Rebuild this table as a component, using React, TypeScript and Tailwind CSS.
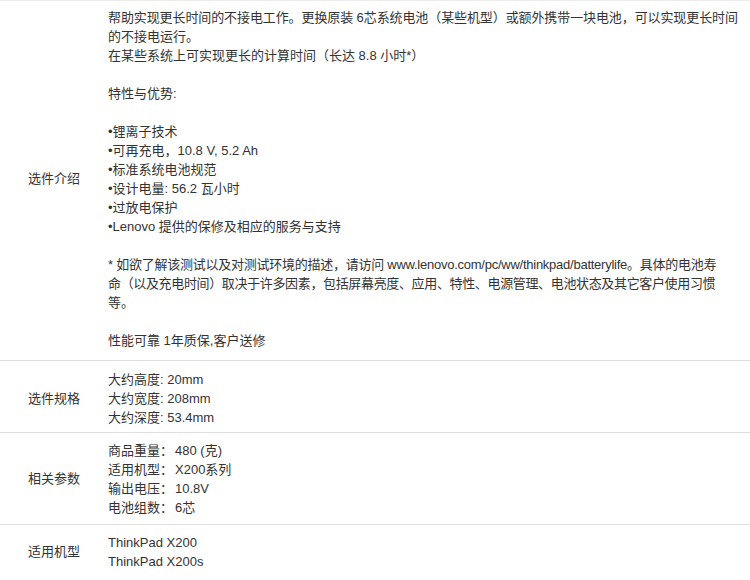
import React from "react";

const font = {
  fontFamily: '"Liberation Sans", "Noto Sans CJK SC", sans-serif',
};

function Line({ children, className = "" }: { children?: React.ReactNode; className?: string }) {
  return (
    <div className={`h-[19px] leading-[19px] whitespace-nowrap ${className}`}>{children ?? "\u00a0"}</div>
  );
}

function Row({
  label,
  children,
  className = "",
}: {
  label: string;
  children: React.ReactNode;
  className?: string;
}) {
  return (
    <div className={`flex border-b border-[#dedede] ${className}`}>
      <div className="w-[108px] shrink-0 flex items-center justify-center">{label}</div>
      <div className="flex-1 min-w-0">{children}</div>
    </div>
  );
}

export default function App() {
  return (
    <div
      className="w-[750px] h-[580px] overflow-hidden bg-white text-[13px] text-[#333]"
      style={font}
    >
      <div className="border-t border-[#ececec]">
        <Row label="选件介绍" className="pt-[7px] pb-[10px]">
          <Line className="tracking-[-0.1px]">帮助实现更长时间的不接电工作。更换原装 6芯系统电池（某些机型）或额外携带一块电池，可以实现更长时间</Line>
          <Line>的不接电运行。</Line>
          <Line>在某些系统上可实现更长的计算时间（长达 8.8 小时*）</Line>
          <Line />
          <Line>特性与优势:</Line>
          <Line />
          <Line>•锂离子技术</Line>
          <Line>•可再充电，10.8 V, 5.2 Ah</Line>
          <Line>•标准系统电池规范</Line>
          <Line>•设计电量: 56.2 瓦小时</Line>
          <Line>•过放电保护</Line>
          <Line>•Lenovo 提供的保修及相应的服务与支持</Line>
          <Line />
          <Line className="tracking-[-0.25px]">* 如欲了解该测试以及对测试环境的描述，请访问 www.lenovo.com/pc/ww/thinkpad/batterylife。具体的电池寿</Line>
          <Line className="tracking-[-0.35px]">命（以及充电时间）取决于许多因素，包括屏幕亮度、应用、特性、电源管理、电池状态及其它客户使用习惯</Line>
          <Line>等。</Line>
          <Line />
          <Line>性能可靠 1年质保,客户送修</Line>
        </Row>
        <Row label="选件规格" className="pt-[9px] pb-[5px]">
          <Line>大约高度: 20mm</Line>
          <Line>大约宽度: 208mm</Line>
          <Line>大约深度: 53.4mm</Line>
        </Row>
        <Row label="相关参数" className="pt-[8px] pb-[7px]">
          {[
            ["商品重量：", "480 (克)"],
            ["适用机型：", "X200系列"],
            ["输出电压：", "10.8V"],
            ["电池组数：", "6芯"],
          ].map(([k, v]) => (
            <div key={k} className="flex h-[19px] leading-[19px] whitespace-nowrap">
              <span className="w-[67px] shrink-0">{k}</span>
              <span>{v}</span>
            </div>
          ))}
        </Row>
        <div className="flex pt-[8px]">
          <div className="w-[108px] shrink-0 flex items-center justify-center">适用机型</div>
          <div className="flex-1">
            <Line>ThinkPad X200</Line>
            <Line>ThinkPad X200s</Line>
          </div>
        </div>
      </div>
    </div>
  );
}
